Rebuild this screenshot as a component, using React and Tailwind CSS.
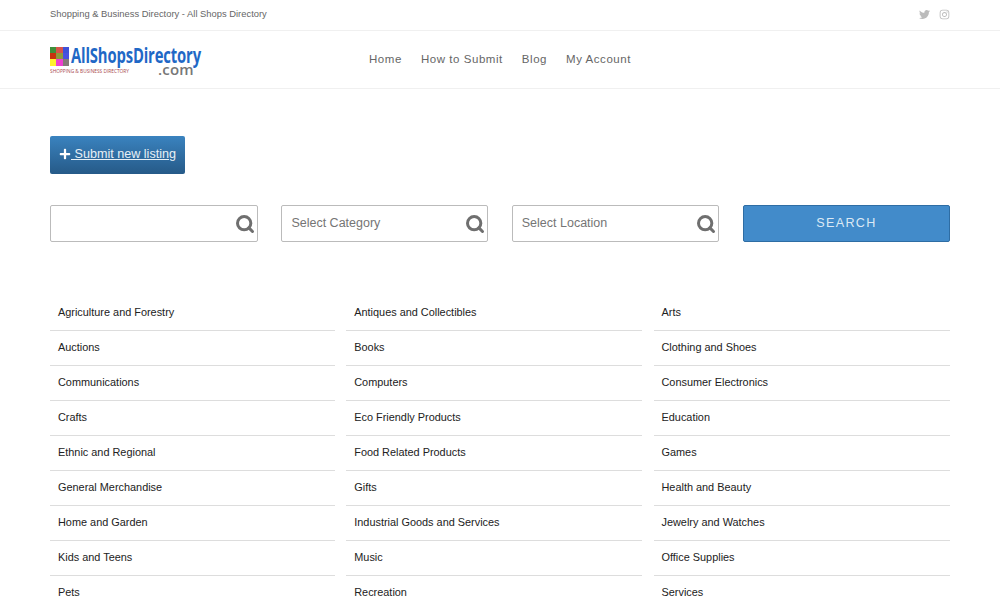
import { Search } from "lucide-react";
import { FaPlus, FaTwitter, FaInstagram } from "react-icons/fa";

const categories = [
	["Agriculture and Forestry", "Antiques and Collectibles", "Arts"],
	["Auctions", "Books", "Clothing and Shoes"],
	["Communications", "Computers", "Consumer Electronics"],
	["Crafts", "Eco Friendly Products", "Education"],
	["Ethnic and Regional", "Food Related Products", "Games"],
	["General Merchandise", "Gifts", "Health and Beauty"],
	["Home and Garden", "Industrial Goods and Services", "Jewelry and Watches"],
	["Kids and Teens", "Music", "Office Supplies"],
	["Pets", "Recreation", "Services"],
];

const swatches = [
	"bg-[#3f8f3a]", "bg-[#d9534a]", "bg-[#3f51d8]",
	"bg-[#c8320f]", "bg-[#8f9a3c]", "bg-[#4a4fe0]",
	"bg-[#fff22e]", "bg-[#ee3fd0]", "bg-[#857a78]",
];

function Logo() {
	return (
		<div className="relative w-[152px] h-[30px]">
			<div className="grid grid-cols-3 w-[19px] h-[19px] mt-[2px]">
				{swatches.map((c, i) => (
					<div key={i} className={c} />
				))}
			</div>
			<div className="absolute left-[21px] top-[2px] text-[21px] leading-[16px] font-bold text-[#1f68c6] font-['Open_Sans',sans-serif] whitespace-nowrap origin-left scale-x-[0.705] tracking-[-0.2px]">
				AllShopsDirectory
			</div>
			<div className="absolute left-[108px] top-[19px] text-[15px] leading-[10px] font-semibold text-[#777] font-['Open_Sans',sans-serif] tracking-[0.2px]">
				.com
			</div>
			<div className="absolute left-0 top-[22px] text-[6px] leading-[8px] text-[#a8484c] font-['Open_Sans',sans-serif] whitespace-nowrap origin-left scale-x-[0.8]">
				SHOPPING &amp; BUSINESS DIRECTORY
			</div>
		</div>
	);
}

function SearchBox({ placeholder }) {
	return (
		<div className="flex items-center justify-between h-[37px] border border-[#bbb] rounded-[2px] bg-white pl-[9px] pr-[2px]">
			<span className="text-[12.5px] text-[#757575]">{placeholder}</span>
			<Search size={20} strokeWidth={3.6} className="text-[#6f6f6f]" />
		</div>
	);
}

export default function App() {
	return (
		<div className="w-[1000px] h-[600px] overflow-hidden bg-white font-['Liberation_Sans',Arial,sans-serif]">
			<div className="h-[31px] border-b border-[#f0f0f0] px-[50px] pb-[2px] flex items-center justify-between">
				<span className="text-[9.4px] text-[#666]">Shopping &amp; Business Directory - All Shops Directory</span>
				<div className="flex items-center gap-[9px] text-[#bbb] text-[11px]">
					<FaTwitter />
					<FaInstagram />
				</div>
			</div>

			<div className="relative h-[58px] border-b border-[#f0f0f0] px-[50px] flex items-center">
				<Logo />
				<nav className="flex gap-[19px] ml-[167px] text-[11.5px] tracking-[0.55px] text-[#666]">
					<span>Home</span>
					<span>How to Submit</span>
					<span>Blog</span>
					<span>My Account</span>
				</nav>
			</div>

			<div className="px-[50px] pt-[47px]">
				<div className="w-[135px] h-[38px] rounded-[2px] bg-gradient-to-b from-[#3a83bf] to-[#265a88] flex items-center pl-[9px] pb-[2px] text-[12.6px] text-[#e8f0f6] underline">
					<FaPlus size={12} className="text-white shrink-0" />
					<span className="whitespace-pre"> Submit new listing</span>
				</div>

				<div className="grid grid-cols-[208px_207px_207px_1fr] gap-x-[23.4px] mt-[31px]">
					<SearchBox placeholder="" />
					<SearchBox placeholder="Select Category" />
					<SearchBox placeholder="Select Location" />
					<div className="w-[207px] justify-self-end h-[37px] rounded-[2px] bg-[#428bca] border border-[#2e6da4] flex items-center justify-center text-[12.6px] tracking-[1.3px] text-[#dbe9f5]">
						SEARCH
					</div>
				</div>

				<div className="mt-[54px] flex flex-col">
					{categories.map((row, i) => (
						<div key={i} className="grid grid-cols-[285px_296px_296px] gap-x-[11.25px]">
							{row.map((name) => (
								<div key={name} className="h-[35px] border-b border-[#ddd] pl-[8px] pb-[1px] flex items-center text-[10.9px] text-[#222]">
									{name}
								</div>
							))}
						</div>
					))}
				</div>
			</div>
		</div>
	);
}
